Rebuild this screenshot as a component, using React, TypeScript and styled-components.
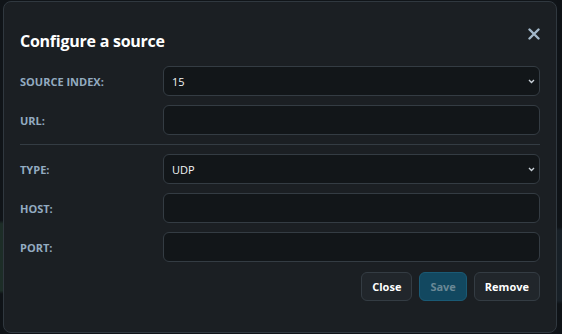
import React from "react";
import styled, { createGlobalStyle } from "styled-components";

const Global = createGlobalStyle`
  html, body { margin: 0; padding: 0; background: #0e1215; }
  body { font-family: "Open Sans", "Noto Sans", sans-serif; }
  * { box-sizing: border-box; }
`;

const Backdrop = styled.div`
  width: 562px;
  height: 334px;
  padding: 1px 5px 1px 3px;
  background:
    linear-gradient(180deg, #101418 0%, #101418 66%, #1d2d27 67%, #1d2d27 87%, #0f1317 88%) no-repeat 0 0 / 3px 100%,
    linear-gradient(180deg, #0f1317 0%, #0f1317 68%, #182027 69%, #182027 90%, #0f1317 91%) no-repeat 100% 0 / 5px 100%,
    #101418;
`;

const Modal = styled.div`
  height: 332px;
  background: #1b1f23;
  border: 1px solid #30383f;
  border-radius: 8px;
  padding: 0 16px 0 16px;
  display: flex;
  flex-direction: column;
`;

const Header = styled.div`
  display: flex;
  align-items: center;
  justify-content: space-between;
  height: 56px;
  padding-top: 22px;
`;

const Title = styled.h2`
  margin: 0;
  font-size: 16px;
  font-weight: 700;
  color: #ffffff;
  letter-spacing: -0.25px;
`;

const CloseX = styled.button`
  background: none;
  border: none;
  padding: 0;
  margin-right: -2px;
  margin-top: -14px;
  width: 16px;
  height: 16px;
  display: flex;
  align-items: center;
  justify-content: center;
  cursor: pointer;
`;

const Form = styled.div`
  margin-top: 8px;
  display: flex;
  flex-direction: column;
`;

const Row = styled.div`
  display: grid;
  grid-template-columns: 143px 1fr;
  align-items: center;
  height: 30px;
  margin-bottom: 9px;
`;

const Label = styled.label`
  font-size: 11px;
  font-weight: 700;
  color: #93abc0;
  text-transform: uppercase;
`;

const Field = styled.div`
  position: relative;
  height: 30px;
  background: #121619;
  border: 1px solid #343c43;
  border-radius: 6px;
  display: flex;
  align-items: center;
  padding: 0 8px;
  font-size: 11px;
  color: #f2f5f7;
`;

const Chevron = styled.svg`
  position: absolute;
  right: 4px;
  top: 50%;
  margin-top: -2px;
`;

const Divider = styled.hr`
  margin: 0 0 9px 0;
  border: none;
  border-top: 1px solid #343c43;
  height: 0;
`;

const Footer = styled.div`
  display: flex;
  justify-content: flex-end;
  gap: 7px;
  margin-top: 1px;
`;

const Button = styled.button<{ $primary?: boolean }>`
  height: 29px;
  padding: 0 10px;
  border-radius: 6px;
  font-family: inherit;
  font-size: 11px;
  font-weight: 700;
  border: 1px solid ${(p) => (p.$primary ? "#1a5a75" : "#343c43")};
  background: ${(p) => (p.$primary ? "#124860" : "#21262b")};
  color: ${(p) => (p.$primary ? "#6a8896" : "#ffffff")};
`;

const ChevronIcon = () => (
  <Chevron width="7" height="5" viewBox="0 0 7 5">
    <path d="M1 1 L3.5 3.5 L6 1" fill="none" stroke="#c9d1d8" strokeWidth="1.4" />
  </Chevron>
);

const rows1 = [
  { label: "Source index:", value: "15", select: true },
  { label: "URL:", value: "", select: false },
];
const rows2 = [
  { label: "Type:", value: "UDP", select: true },
  { label: "Host:", value: "", select: false },
  { label: "Port:", value: "", select: false },
];

const FieldRow = ({ label, value, select }: { label: string; value: string; select: boolean }) => (
  <Row>
    <Label>{label}</Label>
    <Field>
      {value}
      {select && <ChevronIcon />}
    </Field>
  </Row>
);

export default function App() {
  return (
    <>
      <Global />
      <Backdrop>
        <Modal>
          <Header>
            <Title>Configure a source</Title>
            <CloseX aria-label="Close">
              <svg width="12" height="12" viewBox="0 0 12 12">
                <path d="M1.5 1.5 L10.5 10.5 M10.5 1.5 L1.5 10.5" stroke="#a3b8ca" strokeWidth="2.4" strokeLinecap="round" />
              </svg>
            </CloseX>
          </Header>
          <Form>
            {rows1.map((r) => (
              <FieldRow key={r.label} {...r} />
            ))}
            <Divider />
            {rows2.map((r) => (
              <FieldRow key={r.label} {...r} />
            ))}
            <Footer>
              <Button>Close</Button>
              <Button $primary>Save</Button>
              <Button>Remove</Button>
            </Footer>
          </Form>
        </Modal>
      </Backdrop>
    </>
  );
}
